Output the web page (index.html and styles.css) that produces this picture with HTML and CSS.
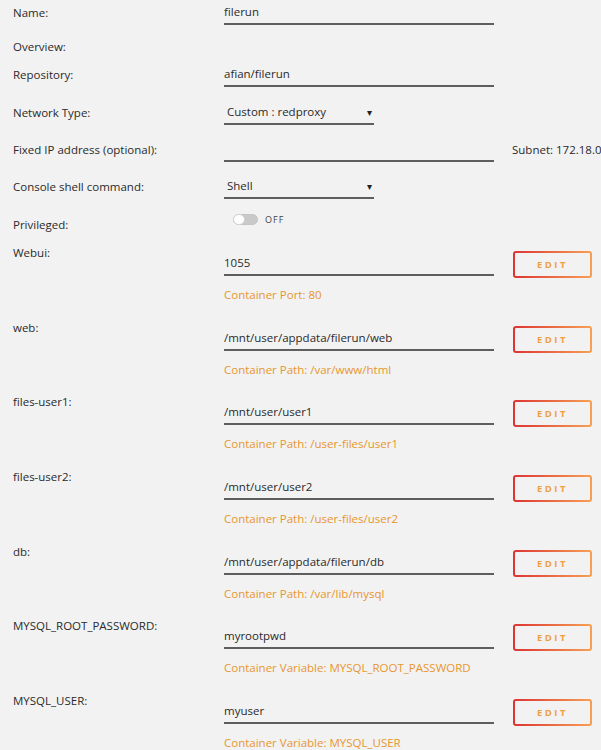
FILE: index.html
```html
<!DOCTYPE html>
<html lang="en">
<head>
  <meta charset="UTF-8" />
  <title>Update Container</title>
  <link rel="stylesheet" href="styles.css">
</head>
<body>
  <div class="form">
    <div class="row r-name">
      <div class="label">Name:</div>
      <div class="field">filerun</div>
    </div>
    <div class="row r-overview">
      <div class="label">Overview:</div>
    </div>
    <div class="row r-repo">
      <div class="label">Repository:</div>
      <div class="field">afian/filerun</div>
    </div>
    <div class="row r-net">
      <div class="label">Network Type:</div>
      <div class="field select">Custom : redproxy<span class="arrow">&#9662;</span></div>
    </div>
    <div class="row r-ip">
      <div class="label">Fixed IP address (optional):</div>
      <div class="field"></div>
      <div class="note">Subnet: 172.18.0.0/16</div>
    </div>
    <div class="row r-shell">
      <div class="label">Console shell command:</div>
      <div class="field select">Shell<span class="arrow">&#9662;</span></div>
    </div>
    <div class="row r-priv">
      <div class="label">Privileged:</div>
      <div class="switch">
        <span class="track"><span class="knob"></span></span>
        <span class="off">OFF</span>
      </div>
    </div>

    <div class="config">
      <div class="label">Webui:</div>
      <div class="cfield">
        <div class="field">1055</div>
        <div class="caption">Container Port: 80</div>
      </div>
      <div class="buttons"><button class="btn">EDIT</button><button class="btn">REMOVE</button></div>
    </div>
    <div class="config">
      <div class="label">web:</div>
      <div class="cfield">
        <div class="field">/mnt/user/appdata/filerun/web</div>
        <div class="caption">Container Path: /var/www/html</div>
      </div>
      <div class="buttons"><button class="btn">EDIT</button><button class="btn">REMOVE</button></div>
    </div>
    <div class="config">
      <div class="label">files-user1:</div>
      <div class="cfield">
        <div class="field">/mnt/user/user1</div>
        <div class="caption">Container Path: /user-files/user1</div>
      </div>
      <div class="buttons"><button class="btn">EDIT</button><button class="btn">REMOVE</button></div>
    </div>
    <div class="config">
      <div class="label">files-user2:</div>
      <div class="cfield">
        <div class="field">/mnt/user/user2</div>
        <div class="caption">Container Path: /user-files/user2</div>
      </div>
      <div class="buttons"><button class="btn">EDIT</button><button class="btn">REMOVE</button></div>
    </div>
    <div class="config">
      <div class="label">db:</div>
      <div class="cfield">
        <div class="field">/mnt/user/appdata/filerun/db</div>
        <div class="caption">Container Path: /var/lib/mysql</div>
      </div>
      <div class="buttons"><button class="btn">EDIT</button><button class="btn">REMOVE</button></div>
    </div>
    <div class="config">
      <div class="label">MYSQL_ROOT_PASSWORD:</div>
      <div class="cfield">
        <div class="field">myrootpwd</div>
        <div class="caption">Container Variable: MYSQL_ROOT_PASSWORD</div>
      </div>
      <div class="buttons"><button class="btn">EDIT</button><button class="btn">REMOVE</button></div>
    </div>
    <div class="config">
      <div class="label">MYSQL_USER:</div>
      <div class="cfield">
        <div class="field">myuser</div>
        <div class="caption">Container Variable: MYSQL_USER</div>
      </div>
      <div class="buttons"><button class="btn">EDIT</button><button class="btn">REMOVE</button></div>
    </div>
  </div>
</body>
</html>
```

FILE: styles.css
```css
* {
  margin: 0;
  padding: 0;
  box-sizing: border-box;
}

html, body {
  width: 100%;
  height: 100%;
  overflow: hidden;
  background-color: #f2f2f2;
  font-family: "Open Sans", sans-serif;
  font-size: 11.5px;
  color: #2a2a2a;
}

.form {
  padding-top: 1px;
  width: 900px;
}

/* top settings */
.row {
  display: flex;
  align-items: flex-start;
}
.row .label {
  width: 224px;
  padding-left: 13px;
  line-height: 24px;
}
.field {
  width: 270px;
  height: 24px;
  line-height: 22px;
  border-bottom: 2px solid #5e5e5e;
  white-space: nowrap;
}
.field.select {
  width: 150px;
  padding-left: 3px;
  position: relative;
}
.arrow {
  position: absolute;
  right: 2px;
  top: 0;
  font-size: 10px;
  color: #222;
}
.note {
  margin-left: 18px;
  line-height: 24px;
  white-space: nowrap;
}

.r-name { height: 34px; }
.r-overview { height: 28px; }
.r-repo { height: 38px; }
.r-net { height: 37px; }
.r-ip { height: 37px; }
.r-shell { height: 38px; }
.r-priv { height: 30px; }

.switch {
  display: flex;
  align-items: center;
  gap: 7px;
  margin-left: 9px;
  height: 12px;
}
.track {
  width: 25px;
  height: 11px;
  border-radius: 6px;
  background: #c9c9c9;
  border: 1px solid #c4c4c4;
  display: flex;
  align-items: center;
}
.knob {
  width: 12px;
  height: 11px;
  border-radius: 6px;
  background: #fff;
  border: 1px solid #d0d0d0;
  margin-left: -1px;
}
.off {
  font-size: 9px;
  letter-spacing: 1px;
  color: #444;
}

/* container config entries */
.config {
  display: flex;
  align-items: flex-start;
  height: 74.67px;
}
.config .label {
  width: 224px;
  padding-left: 13px;
  line-height: 20px;
}
.cfield {
  padding-top: 9px;
}
.cfield .field {
  height: 24px;
}
.caption {
  margin-top: 11px;
  line-height: 16px;
  color: #e8962f;
  white-space: nowrap;
}
.buttons {
  display: flex;
  gap: 9px;
  margin-left: 19px;
  margin-top: 8px;
}
.btn {
  width: 79px;
  height: 27px;
  border: 2px solid transparent;
  border-radius: 3px;
  background: linear-gradient(#f2f2f2, #f2f2f2) padding-box,
    linear-gradient(90deg, #dc3434, #f8a054) border-box;
  font-family: "Open Sans", sans-serif;
  font-size: 9.5px;
  font-weight: 700;
  letter-spacing: 2.5px;
  color: #efa045;
}
```
